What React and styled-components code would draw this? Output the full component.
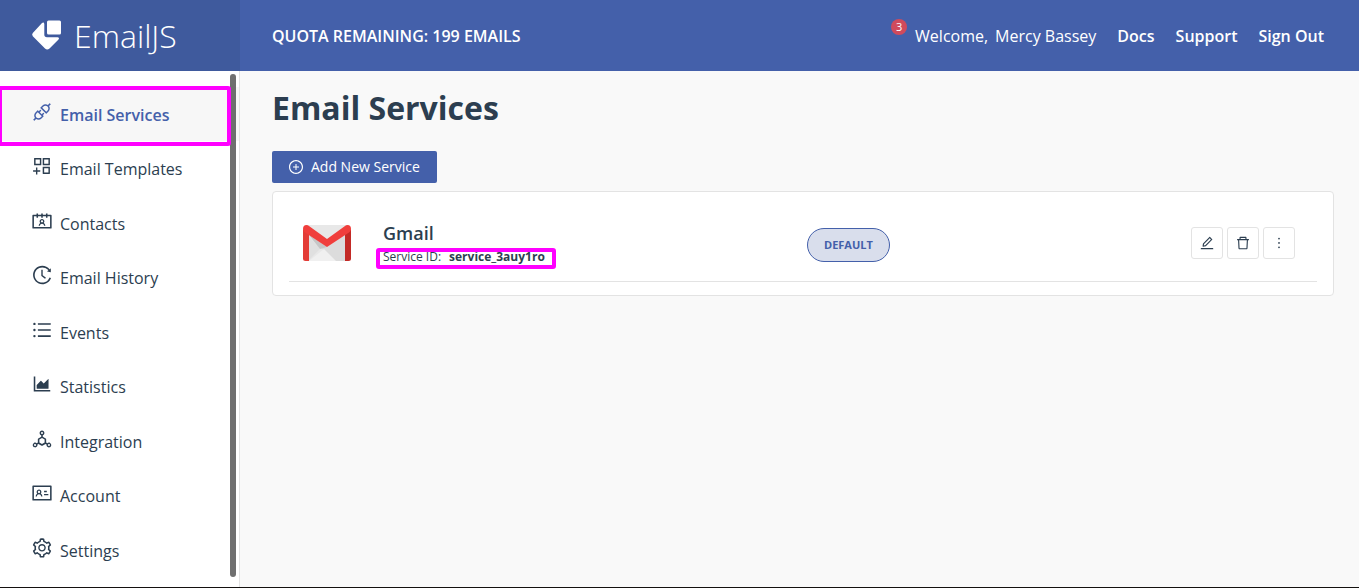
import React from 'react';
import styled, { createGlobalStyle } from 'styled-components';
import {
  AiOutlineApi,
  AiOutlineAppstoreAdd,
  AiOutlineContacts,
  AiOutlineHistory,
  AiOutlineUnorderedList,
  AiOutlineAreaChart,
  AiOutlineDeploymentUnit,
  AiOutlineIdcard,
  AiOutlineSetting,
  AiOutlinePlusCircle,
  AiOutlineEdit,
  AiOutlineDelete,
  AiOutlineMore,
} from 'react-icons/ai';

const blue = '#4460aa';
const ink = '#2c3e50';
const line = '#e3e3e3';
const highlight = '#ff00ff';

const GlobalStyle = createGlobalStyle`
  *, *::before, *::after { box-sizing: border-box; }
  body {
    margin: 0;
    font-family: 'Open Sans', 'Noto Sans', sans-serif;
    font-size: 16px;
    line-height: 24px;
    color: ${ink};
    background: #f9f9f9;
  }
  a { color: inherit; text-decoration: none; }
`;

const Page = styled.div`
  display: flex;
  flex-direction: column;
  min-height: 100vh;
  border-bottom: 1px solid #14110f;
`;

const Header = styled.header`
  display: flex;
  flex: 0 0 71px;
  color: #fff;
  background: ${blue};
`;

const Brand = styled.a`
  display: flex;
  align-items: center;
  gap: 11px;
  flex: 0 0 240px;
  padding-left: 31px;
  background: #3f5a9d;
`;

const BrandName = styled.span`
  font-size: 32px;
  font-weight: 300;
  line-height: 40px;
`;

const TopBar = styled.div`
  display: flex;
  flex: 1;
  align-items: center;
  justify-content: space-between;
  padding: 0 35px 0 32px;
`;

const Quota = styled.span`
  font-weight: 600;
`;

const TopNav = styled.nav`
  display: flex;
  gap: 21px;
`;

const TopLink = styled.a`
  font-weight: 600;
`;

const Welcome = styled.a`
  position: relative;
  display: flex;
  gap: 7px;
`;

const Badge = styled.span`
  position: absolute;
  top: -5px;
  left: -24px;
  width: 16px;
  height: 16px;
  border-radius: 50%;
  background: #d04a5c;
  font-size: 11px;
  line-height: 16px;
  text-align: center;
`;

const Body = styled.div`
  display: flex;
  flex: 1;
`;

const Sidebar = styled.nav`
  position: relative;
  display: flex;
  flex: 0 0 240px;
  padding: 16px 0 10px;
  border-right: 1px solid ${line};
  background: #fff;
`;

const ScrollThumb = styled.div`
  position: absolute;
  top: 3px;
  right: 3px;
  bottom: 10px;
  width: 6px;
  border-radius: 3px;
  background: #6f6f6f;
`;

const Menu = styled.ul`
  display: flex;
  flex: 1;
  flex-direction: column;
  margin: 0;
  padding: 0;
  list-style: none;
`;

const MenuItem = styled.li`
  position: relative;
  display: flex;
  flex: 1;
`;

const MenuLink = styled.a`
  flex: 1;
  padding: 14px 31px 8px;
  color: ${(p) => (p.$active ? blue : ink)};
  font-weight: ${(p) => (p.$active ? 600 : 400)};
  background: ${(p) => (p.$active ? '#f7f7f7' : 'transparent')};

  svg {
    width: 22px;
    height: 22px;
    margin-right: 7px;
    vertical-align: -2px;
  }
`;

const Marker = styled.span`
  position: absolute;
  inset: ${(p) => p.$inset};
  border: 4px solid ${highlight};
  border-radius: 3px;
  pointer-events: none;
  z-index: 1;
`;

const Main = styled.main`
  flex: 1;
  padding: 16px 25px 32px 32px;
`;

const Title = styled.h1`
  margin: 0 0 22px;
  font-size: 32px;
  font-weight: 700;
  line-height: 42px;
`;

const AddButton = styled.button`
  display: flex;
  align-items: center;
  gap: 7px;
  height: 32px;
  margin-bottom: 8px;
  padding: 0 17px 0 16px;
  border: 0;
  border-radius: 2px;
  color: #fff;
  background: ${blue};
  font: inherit;
  font-size: 14px;
`;

const Card = styled.section`
  padding: 16px 16px 13px;
  border: 1px solid ${line};
  border-radius: 4px;
  background: #fff;
`;

const ServiceRow = styled.article`
  display: flex;
  align-items: center;
  padding: 11px 0 14px;
  border-bottom: 1px solid ${line};
`;

const Identity = styled.div`
  display: flex;
  align-items: center;
  gap: 32px;
  flex: 0 0 50%;
  padding-left: 14px;
`;

const ServiceName = styled.h2`
  margin: 0;
  font-size: 18px;
  font-weight: 600;
  line-height: 28px;
`;

const ServiceId = styled.p`
  position: relative;
  display: flex;
  gap: 8px;
  margin: 0;
  font-size: 12px;
  line-height: 20px;
`;

const RowTools = styled.div`
  display: flex;
  flex: 1;
  align-items: center;
  justify-content: space-between;
  padding: 0 22px 0 4px;
`;

const DefaultTag = styled.span`
  margin-top: 4px;
  padding: 0 16px;
  border: 1px solid ${blue};
  border-radius: 17px;
  color: ${blue};
  background: #d9deec;
  font-size: 11px;
  font-weight: 700;
  line-height: 32px;
`;

const Actions = styled.div`
  display: flex;
  gap: 4px;
`;

const ActionButton = styled.button`
  display: grid;
  place-items: center;
  width: 32px;
  height: 32px;
  padding: 0;
  border: 1px solid ${line};
  border-radius: 3px;
  color: ${ink};
  background: #fff;
  font-size: 16px;
`;

const menu = [
  { label: 'Email Services', Icon: AiOutlineApi, active: true },
  { label: 'Email Templates', Icon: AiOutlineAppstoreAdd },
  { label: 'Contacts', Icon: AiOutlineContacts },
  { label: 'Email History', Icon: AiOutlineHistory },
  { label: 'Events', Icon: AiOutlineUnorderedList },
  { label: 'Statistics', Icon: AiOutlineAreaChart },
  { label: 'Integration', Icon: AiOutlineDeploymentUnit },
  { label: 'Account', Icon: AiOutlineIdcard },
  { label: 'Settings', Icon: AiOutlineSetting },
];

const actions = [
  { label: 'Edit', Icon: AiOutlineEdit },
  { label: 'Delete', Icon: AiOutlineDelete },
  { label: 'More', Icon: AiOutlineMore },
];

function BrandMark() {
  return (
    <svg width="32" height="32" viewBox="0 1 32 32" fill="#fff" aria-hidden="true">
      <path d="M17.500 1.500H28.500Q30 1.500 30 3V14Q30 15.500 28.500 15.500H17.500Q16 15.500 16 14V3Q16 1.500 17.500 1.500Z" />
      <path d="M11 4Q13 2.800 13.300 5V15.500Q13.300 18.300 16 18.300H26.500Q28.800 18.700 27.500 20.500L18.500 29.500Q16.200 31.500 14 29.500L1.800 17.200Q.5 15.500 1.800 14Z" />
    </svg>
  );
}

function GmailLogo() {
  return (
    <svg width="48" height="37" viewBox="0 0 48 37" aria-hidden="true">
      <path d="M3 0H45V36H3Z" fill="#e8e8e8" />
      <path d="M6 10 24 22 42 10V36H31Z" fill="#dcdcdc" />
      <path d="M6 11 17 24 6 35Z" fill="#e0e0e0" />
      <path d="M6 10 24 22 17 24Z" fill="#c6c6c6" />
      <path d="M6 36 21 24 33 36Z" fill="#f0f0f0" />
      <path d="M6 9 0 4V33.500Q0 36 2.500 36H6Z" fill="#e33c37" />
      <path d="M42 9 48 4V33.500Q48 36 45.500 36H42Z" fill="#c32a26" />
      <path d="M0 4Q0 0 3.500 0 5 0 6 1L24 14 42 1Q43 0 44.500 0 48 0 48 4 48 6 46 7.500L24 22 2 7.500Q0 6 0 4Z" fill="#f03e3c" />
    </svg>
  );
}

export default function App() {
  return (
    <>
      <GlobalStyle />
      <Page>
        <Header>
          <Brand href="#">
            <BrandMark />
            <BrandName>EmailJS</BrandName>
          </Brand>
          <TopBar>
            <Quota>QUOTA REMAINING: 199 EMAILS</Quota>
            <TopNav aria-label="Account">
              <Welcome href="#">
                <Badge>3</Badge>
                <span>Welcome,</span>
                <span>Mercy Bassey</span>
              </Welcome>
              <TopLink href="#">Docs</TopLink>
              <TopLink href="#">Support</TopLink>
              <TopLink href="#">Sign Out</TopLink>
            </TopNav>
          </TopBar>
        </Header>
        <Body>
          <Sidebar aria-label="Main">
            <Menu>
              {menu.map(({ label, Icon, active }) => (
                <MenuItem key={label}>
                  <MenuLink href="#" $active={active}>
                    <Icon />
                    {label}
                  </MenuLink>
                  {active && <Marker $inset="-1px 8px -5px -2px" />}
                </MenuItem>
              ))}
            </Menu>
            <ScrollThumb />
          </Sidebar>
          <Main>
            <Title>Email Services</Title>
            <AddButton type="button">
              <AiOutlinePlusCircle size={16} />
              Add New Service
            </AddButton>
            <Card>
              <ServiceRow>
                <Identity>
                  <GmailLogo />
                  <div>
                    <ServiceName>Gmail</ServiceName>
                    <ServiceId>
                      <span>Service ID:</span>
                      <strong>service_3auy1ro</strong>
                      <Marker $inset="1px -11px -2px -7px" />
                    </ServiceId>
                  </div>
                </Identity>
                <RowTools>
                  <DefaultTag>DEFAULT</DefaultTag>
                  <Actions>
                    {actions.map(({ label, Icon }) => (
                      <ActionButton key={label} type="button" aria-label={label}>
                        <Icon />
                      </ActionButton>
                    ))}
                  </Actions>
                </RowTools>
              </ServiceRow>
            </Card>
          </Main>
        </Body>
      </Page>
    </>
  );
}
